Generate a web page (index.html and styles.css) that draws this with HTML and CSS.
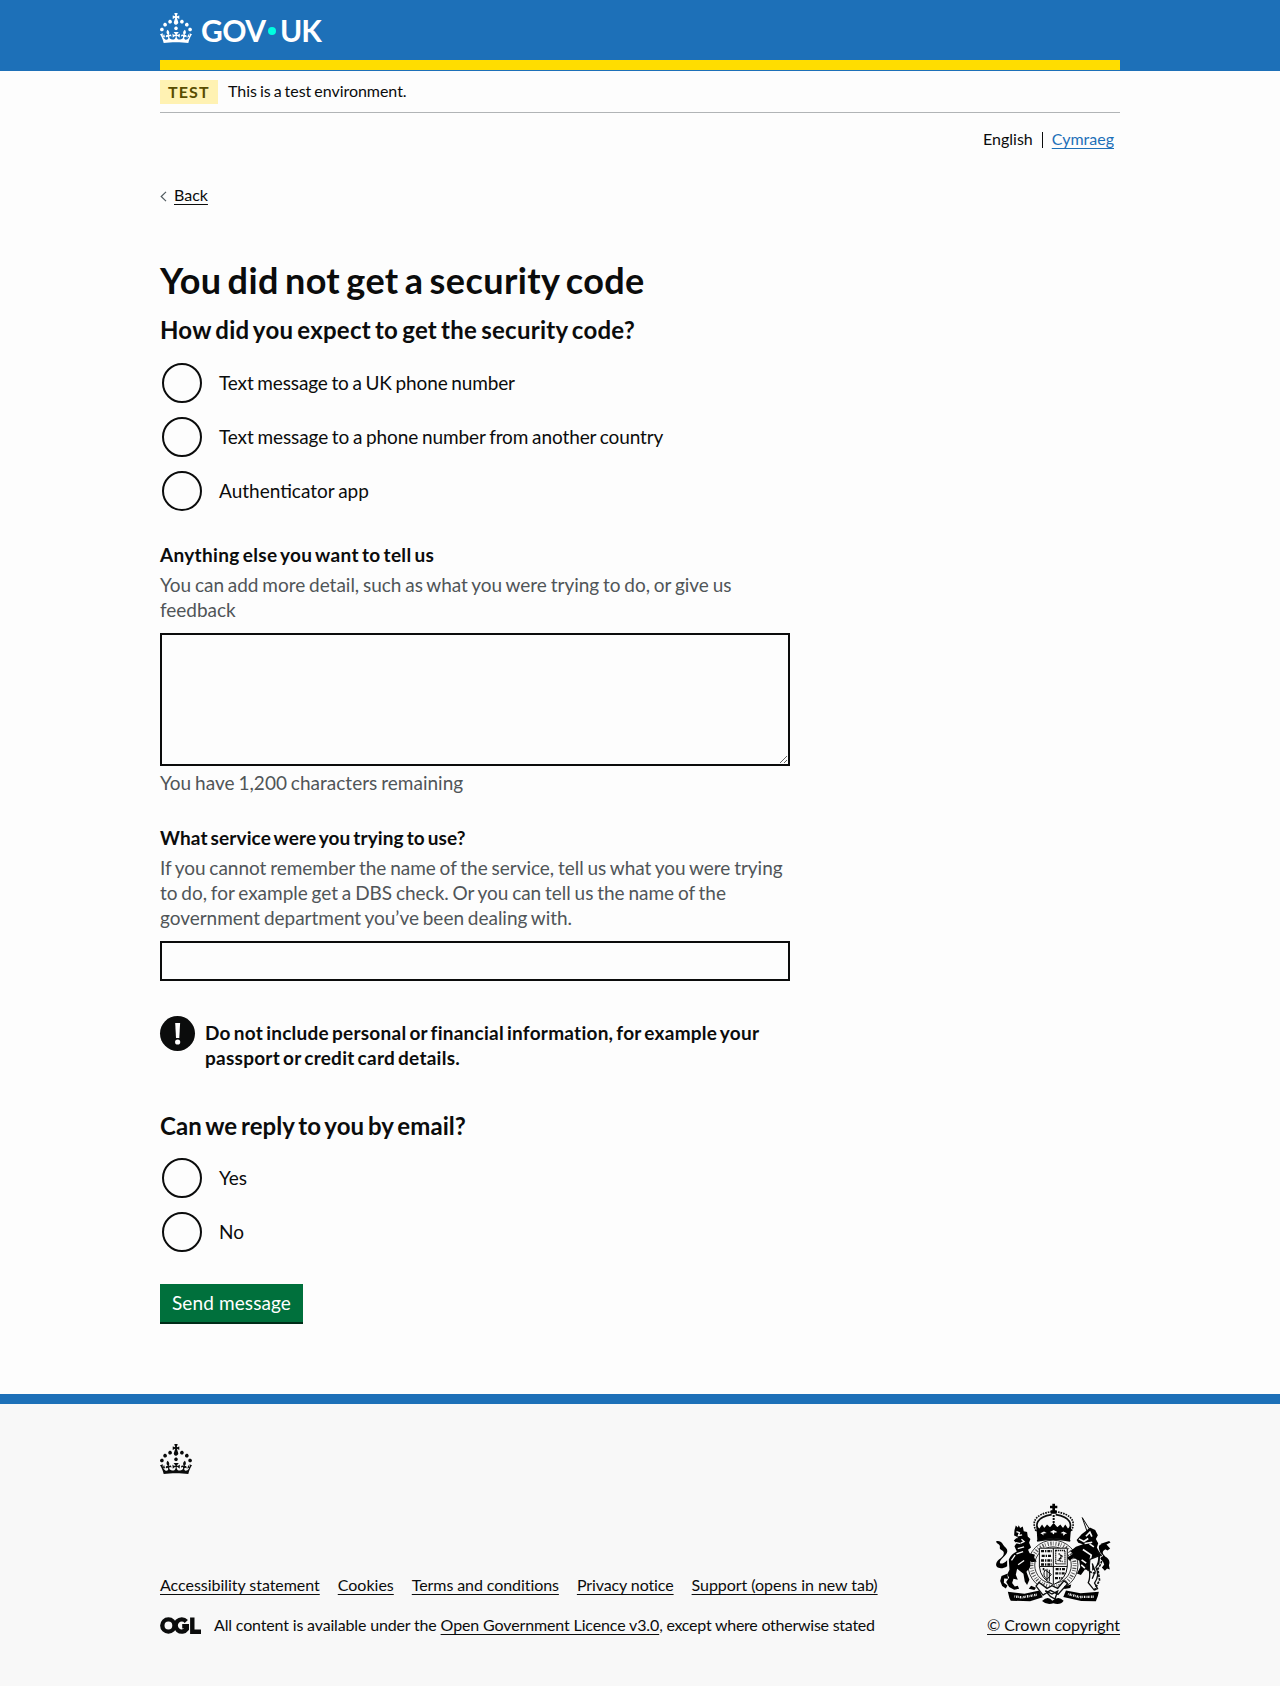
FILE: index.html
```html
<!DOCTYPE html>
<html lang="en">
<head>
<meta charset="utf-8">
<title>You did not get a security code - GOV.UK</title>
<link rel="stylesheet" href="styles.css">
</head>
<body>
<svg class="defs" width="0" height="0" aria-hidden="true">
  <symbol id="crown" viewBox="0 0 32 30"><path fill-rule="evenodd" d="M22.6 10.4c-1 .4-2-.1-2.4-1-.4-.9.1-2 1-2.4.9-.4 2 .1 2.4 1s-.1 2-1 2.4m-5.9 6.7c-.9.4-2-.1-2.4-1-.4-.9.1-2 1-2.4.9-.4 2 .1 2.4 1s-.1 2-1 2.4m10.8-3.7c-1 .4-2-.1-2.4-1-.4-.9.1-2 1-2.4.9-.4 2 .1 2.4 1s0 2-1 2.4m3.3 4.8c-1 .4-2-.1-2.4-1-.4-.9.1-2 1-2.4.9-.4 2 .1 2.4 1s-.1 2-1 2.4M17 4.7l2.3 1.2V2.5l-2.3.7-.2-.2.9-3h-3.4l.9 3-.2.2c-.1.1-2.3-.7-2.3-.7v3.4L15 4.7c.1.1.1.2.2.2l-1.3 4c-.1.2-.1.4-.1.6 0 1.1.8 2 1.9 2.2h.7c1-.2 1.9-1.1 1.9-2.1 0-.2 0-.4-.1-.6l-1.3-4c-.1-.2 0-.2.1-.3m-7.6 5.7c.9.4 2-.1 2.4-1 .4-.9-.1-2-1-2.4-.9-.4-2 .1-2.4 1s0 2 1 2.4m-5 3c.9.4 2-.1 2.4-1 .4-.9-.1-2-1-2.4-.9-.4-2 .1-2.4 1s.1 2 1 2.4m-3.2 4.8c.9.4 2-.1 2.4-1 .4-.9-.1-2-1-2.4-.9-.4-2 .1-2.4 1s0 2 1 2.4m14.8 11c4.4 0 8.6.3 12.3.8 1.1-4.5 2.4-7 3.7-8.8l-2.5-.9c.2 1.3.3 1.9 0 2.7-.4-.4-.8-1.1-1.1-2.3l-1.2 4c.7-.5 1.3-.8 2-.9-1.1 2.5-2.6 3.1-3.5 3-1.1-.2-1.7-1.2-1.5-2.1.3-1.2 1.5-1.5 2.1-.1 1.1-2.3-.8-3-2-2.3 1.9-1.9 2.1-3.5.6-5.6-2.1 1.6-2.1 3.2-1.2 5.5-1.2-1.4-3.2-.6-2.5 1.6.9-1.4 2.1-.5 1.9.8-.2 1.1-1.7 2.1-3.5 1.9-2.7-.2-2.9-2.1-2.9-3.6.7-.1 1.9.5 2.9 1.9l.4-4.3c-1.1 1.1-2.1 1.4-3.2 1.4.4-1.2 2.1-3 2.1-3h-5.4s1.7 1.9 2.1 3c-1.1 0-2.1-.2-3.2-1.4l.4 4.3c1-1.4 2.2-2 2.9-1.9-.1 1.5-.2 3.4-2.9 3.6-1.9.2-3.4-.8-3.5-1.9-.2-1.3 1-2.2 1.9-.8.7-2.3-1.2-3-2.5-1.6.9-2.2.9-3.9-1.2-5.5-1.5 2-1.3 3.7.6 5.6-1.2-.7-3.1 0-2 2.3.6-1.4 1.8-1.1 2.1.1.2.9-.3 1.9-1.5 2.1-.9.2-2.4-.5-3.5-3 .6 0 1.2.3 2 .9l-1.2-4c-.3 1.1-.7 1.9-1.1 2.3-.3-.8-.2-1.4 0-2.7l-2.9.9C1.3 23 2.6 25.5 3.7 30c3.7-.5 7.9-.8 12.3-.8"/></symbol>
</svg>

<header class="header">
  <div class="container header-inner">
    <a class="logo" href="#"><svg class="crown" aria-hidden="true"><use href="#crown"/></svg><span class="logo-gov">GOV</span><span class="logo-dot"></span><span class="logo-uk">UK</span></a>
  </div>
</header>

<div class="container">
  <div class="phase"><strong class="tag">TEST</strong><span class="phase-text">This is a test environment.</span></div>
  <nav class="languages"><span class="english">English</span><span class="divider"></span><a class="cymraeg" href="#">Cymraeg</a></nav>
  <a class="back" href="#"><svg class="chevron" viewBox="0 0 7 10" aria-hidden="true"><path d="M6 .4 1.2 5 6 9.6"/></svg><span>Back</span></a>

  <main class="main">
    <h1>You did not get a security code</h1>
    <h2 class="q1">How did you expect to get the security code?</h2>
    <div class="radios">
      <label class="radio"><input type="radio" name="method"><span class="uk-phone">Text message to a UK phone number</span></label>
      <label class="radio"><input type="radio" name="method"><span class="other-phone">Text message to a phone number from another country</span></label>
      <label class="radio"><input type="radio" name="method"><span class="app">Authenticator app</span></label>
    </div>

    <label class="label" for="more">Anything else you want to tell us</label>
    <p class="hint">You can add more detail, such as what you were trying to do, or give us<br>feedback</p>
    <textarea id="more" class="textarea"></textarea>
    <p class="count">You have 1,200 characters remaining</p>

    <label class="label" for="service">What service were you trying to use?</label>
    <p class="hint">If you cannot remember the name of the service, tell us what you were trying<br>to do, for example get a DBS check. Or you can tell us the name of the<br>government department you’ve been dealing with.</p>
    <input id="service" class="input" type="text">

    <div class="warning"><span class="warning-icon" aria-hidden="true"><svg viewBox="0 0 35 35"><path d="M15.2 7h4.9l-.8 15h-3.3z"/><circle cx="17.65" cy="26" r="2.6"/></svg></span><strong>Do not include personal or financial information, for example your<br>passport or credit card details.</strong></div>

    <h2 class="q2">Can we reply to you by email?</h2>
    <div class="radios">
      <label class="radio"><input type="radio" name="reply"><span>Yes</span></label>
      <label class="radio"><input type="radio" name="reply"><span>No</span></label>
    </div>
    <button class="button" type="button">Send message</button>
  </main>
</div>

<footer class="footer">
  <div class="container">
    <svg class="crown" aria-hidden="true"><use href="#crown"/></svg>
    <div class="meta">
      <div class="meta-main">
        <ul class="links">
          <li><a class="l1" href="#">Accessibility statement</a></li>
          <li><a class="l2" href="#">Cookies</a></li>
          <li><a class="l3" href="#">Terms and conditions</a></li>
          <li><a class="l4" href="#">Privacy notice</a></li>
          <li><a class="l5" href="#">Support (opens in new tab)</a></li>
        </ul>
        <div class="licence">
          <svg class="ogl" viewBox="0 0 41 17" aria-label="OGL"><g fill="none" stroke="#0b0c0c" stroke-width="4.4"><circle cx="8.4" cy="8.5" r="6.1"/><path d="M26.3 4.4A6.1 6.1 0 1 0 26.8 12V9.3h-4.6"/><path d="M32.3.5v14.2H41"/></g></svg>
          <span class="licence-text"><span class="t1">All content is available under the </span><a class="t2" href="#">Open Government Licence v3.0</a><span class="t3">, except where otherwise stated</span></span>
        </div>
      </div>
      <a class="copyright" href="#">
        <svg class="crest" viewBox="45 40 360 310" aria-hidden="true">
          <!-- royal crown -->
          <g fill="none" stroke="#0b0c0c">
            <path d="M180 126c-13-20-9-44 38-51M268 126c13-20 9-44-38-51" stroke-width="5"/>
            <path d="M171 124c-14-28-3-50 47-58M277 124c14-28 3-50-47-58" stroke-width="5" stroke-dasharray="5 3"/>
            <path d="M224 76v38" stroke-width="6" stroke-dasharray="6 3"/>
            <path d="M172 124q52-18 104 0M174 154q50-12 100 0" stroke-width="6"/>
            <path d="M178 141q46-13 92 0" stroke-width="11" stroke-dasharray="11 5"/>
          </g>
          <path fill-rule="evenodd" d="M220 42h8v6h7v8h-7v6h5v10h-18V62h5v-6h-7v-8h7zM172 108l9 9 8-12 7 10 8-10 9 8 11-13 11 13 9-8 8 10 7-10 8 12 10-9-4 46q-49-14-98 0zM184 131l11-5 9 5-9 7zM213 127l11-6 11 6-11 7zM244 131l9-5 11 5-11 7z"/>
          <!-- garter and shield -->
          <circle cx="222" cy="227" r="65" fill="none" stroke="#0b0c0c" stroke-width="12" stroke-dasharray="3 5 4 4 2 6" opacity=".7"/>
          <g fill="none" stroke="#0b0c0c" stroke-width="2.5"><circle cx="222" cy="227" r="75"/><circle cx="222" cy="227" r="55"/></g>
          <path d="M181 176h84v55q-2 38-42 55-39-17-42-55z" fill="#f8f8f8" stroke="#0b0c0c" stroke-width="3"/>
          <path d="M223 176v108M181 231h84" stroke="#0b0c0c" stroke-width="3"/>
          <g fill="none" stroke="#0b0c0c" stroke-width="7" stroke-dasharray="9 3 4 3">
            <path d="M186 185h33M188 199h31M186 213h33M186 225h33M230 239h31M229 252h31M228 266h23M191 239h5"/>
          </g>
          <path d="M230 183h28v40h-28zM239 192l10 9-8 13 10 2M236 214l14-16" fill="none" stroke="#0b0c0c" stroke-width="4" stroke-dasharray="4 2"/>
          <path d="M198 241q-9 18 6 29l13-15zM204 238v36M211 241v35" fill="none" stroke="#0b0c0c" stroke-width="3"/>
          <!-- lion -->
          <path d="M106 122l4-14 6 6 3-7 4 8 8-4 3 14 10 2 2 14 8 7-4 12 6 14-9 7 8 18-2 34-11 14 9 24-7 16-7-11-4-23-19-15-4 18 6 15-13-3-4 13 8 10 9-2 4 9-15 3-15-8-9-15 9-14-6-9 7-14-2-31q7-16 24-24l-7-16 6-9-8-8 8-8-7-8z"/>
          <path d="M84 230c-18 12-36 5-33-7 2-14 24-17 23-33-1-10-14-7-12-17 3-10-12-10-11-18 19-3 19 13 29 20 14 15-8 26-16 38-8 13 9 12 20-1z"/>
          <path d="M143 190l24 5-2 10 8 11-15 2-17-12zM67 260l17-7 3 15-12-1-1 13 11 8-5 9-11-7-6-15z"/>
          <path d="M112 126l9 3-3 9 11-2M127 149l8 7-10 5M110 159l14 3M116 177l19-5M106 140l9 5M132 186l-20 7M135 213l-18 13M97 213l11-16" fill="none" stroke="#f8f8f8" stroke-width="4"/>
          <!-- unicorn -->
          <path d="M310 84l22 35-8 5z" fill="#f8f8f8" stroke="#0b0c0c" stroke-width="3"/>
          <path d="M321 124l12-10 16 7 8 16-6 11 7 13-4 13 10 19-2 30-20 20-24-3-12 17-12-5 10-19-3-19-17-9-13 9-6-9 17-12-8-8 17-13 21-8-14-4-5-9 15-17z"/>
          <path d="M321 140l12-12 6 13M300 148l15 8 13-9M317 162l23-4M312 180l25 17-3 14M308 211l14 10M307 226l11 10M332 163l13 9" fill="none" stroke="#f8f8f8" stroke-width="5"/>
          <path d="M333 210c-6 33 6 48-5 70l18 22 10-4-9-17q17-24 4-47 10-14 9-35zM340 222l9 24-9 22" fill="#f8f8f8" stroke="#0b0c0c" stroke-width="4"/>
          <path d="M355 186c24 15 12 38 2 52l5 34-15 30M350 251q-28-2-27-25" fill="none" stroke="#0b0c0c" stroke-width="5" stroke-dasharray="8 3"/>
          <path d="M362 183c-10-30 24-16 18-4-15 7-7 18 4 25 14 11 8 27-6 40l-9-10 10-12-15-15 9-8-9-10z"/>
          <path d="M366 163l25-9 4 5-12 6 11 12-8 6-15-9zM369 207l18 5 6 28-13-4"/>
          <!-- compartment and motto -->
          <path d="M86 307l50 6 45-10 10 21-38 12-58-2-4-7zM261 303l44 9 55-5-3 13-6 16-44-1-54-12z"/>
          <path d="M106 321l23 3 45-8M267 314l34 9 44-1" fill="none" stroke="#f8f8f8" stroke-width="7" stroke-dasharray="2 3 4 2"/>
          <path d="M180 279l-9 11 21 27 22-14 23 12 29-32-11-9-19 23-17-8-15 8zM199 304l20 10 17-9-8 24-14-8z" fill="#f8f8f8" stroke="#0b0c0c" stroke-width="4"/>
          <path d="M189 335q18-17 31-1 18-16 34 0-9 14-31 8-19 7-34-7M156 289l15 6-5 7-17-4M255 291l22-6-3 11-18 3"/>
        </svg>
        <span>© Crown copyright</span>
      </a>
    </div>
  </div>
</footer>
</body>
</html>
```
FILE: styles.css
```css
* { box-sizing: border-box; }
body {
  margin: 0;
  background: #fdfdfd;
  color: #0b0c0c;
  font: 19px/25px Lato, "Open Sans", sans-serif;
  font-kerning: normal;
}
h1, h2, p, ul { margin: 0; padding: 0; }
a { color: inherit; }
.defs { display: block; }
.container { width: 960px; margin: 0 auto; }
.crown { display: block; width: 32px; height: 30px; fill: currentColor; }

.header { height: 71px; background: #1d70b8; color: #fff; }
.header-inner { height: 70px; border-bottom: 10px solid #ffdd00; }
.logo { display: flex; height: 60px; padding-top: 13px; text-decoration: none; font-size: 30px; line-height: 35px; font-weight: 700; }
.logo-gov { width: 65px; margin-left: 9px; letter-spacing: -.5px; }
.logo-dot { width: 8px; height: 8px; margin: 14px 4px 0 2px; border-radius: 50%; background: #00ffe0; }
.logo-uk { letter-spacing: -1px; }

.phase { display: flex; height: 42px; padding-top: 9px; border-bottom: 1px solid #b1b4b6; font-size: 16px; line-height: 20px; }
.tag { width: 58px; height: 24px; padding: 0 0 0 8px; background: #fff2b3; color: #594d00; line-height: 23px; letter-spacing: 1.1px; }
.phase-text { margin-left: 10px; padding-top: 1px; letter-spacing: -.04px; word-spacing: -1px; }
.languages { display: flex; justify-content: flex-end; padding: 16px 6px 0 0; font-size: 16px; line-height: 20px; }
.divider { width: 1px; height: 16px; margin: 3px 9px 0; background: #0b0c0c; }
.cymraeg { color: #1d70b8; text-decoration-thickness: 1px; text-underline-offset: 3px; }
.back { display: flex; width: max-content; margin-top: 36px; font-size: 16px; line-height: 20px; text-decoration: none; }
.back span { text-decoration: underline; text-decoration-thickness: 1px; text-underline-offset: 3px; }
.chevron { width: 7px; height: 11px; margin: 6px 7px 0 0; fill: none; stroke: #505a5f; stroke-width: 1.2; }

.main { padding-top: 55px; }
h1 { font-size: 36px; line-height: 40px; letter-spacing: .4px; word-spacing: -3px; }
h2 { font-size: 24px; line-height: 30px; word-spacing: -2px; }
.q1 { margin-top: 15px; letter-spacing: .25px; }
.q2 { margin-top: 41px; letter-spacing: .06px; }
.radios { display: grid; row-gap: 10px; margin-top: 16px; }
.q2 + .radios { margin-top: 15px; }
.radio { display: flex; align-items: center; height: 44px; word-spacing: -1px; }
.radio input { appearance: none; width: 40px; height: 40px; margin: 0 17px 0 2px; border: 2px solid #0b0c0c; border-radius: 50%; }
.radio span { margin-bottom: 1px; }
.uk-phone { letter-spacing: -.13px; }
.other-phone { letter-spacing: -.1px; }
.app { letter-spacing: 0; }

.label { display: block; margin-top: 29px; font-weight: 700; letter-spacing: .32px; word-spacing: -1.8px; }
.hint { margin-top: 5px; color: #505558; letter-spacing: -.02px; word-spacing: -1px; }
.count + .label { margin-top: 30px; letter-spacing: .12px; }
.textarea, .input { display: block; width: 630px; margin: 10px 0 0; border: 2px solid #0b0c0c; border-radius: 0; background: transparent; padding: 5px; font: inherit; }
.textarea { height: 133px; margin-top: 11px; resize: vertical; }
.input { height: 40px; margin-top: 11px; }
.count { margin-top: 4px; color: #505558; letter-spacing: .02px; word-spacing: -1px; }

.warning { display: flex; margin-top: 35px; }
.warning-icon { width: 35px; height: 35px; margin-right: 10px; border-radius: 50%; background: #0b0c0c; }
.warning-icon svg { display: block; width: 35px; height: 35px; fill: #fff; }
.warning strong { margin-top: 4px; letter-spacing: .25px; word-spacing: -1.8px; }

.button { display: block; width: 143px; height: 38px; margin: 30px 0 72px; border: 0; border-radius: 0; background: #00703c; color: #fff; box-shadow: 0 2px 0 #002d18; font: inherit; letter-spacing: .11px; padding: 0 0 1px; }

.footer { height: 292px; border-top: 10px solid #1d70b8; background: #f8f8f8; padding-top: 40px; font-size: 16px; line-height: 20px; }
.meta { display: flex; justify-content: space-between; align-items: flex-end; margin-top: 29px; }
.links { display: flex; column-gap: 18px; list-style: none; }
.footer a { text-decoration-thickness: 1px; text-underline-offset: 3px; }
.l1 { letter-spacing: -.04px; }
.l3 { letter-spacing: -.08px; }
.l4 { letter-spacing: -.1px; }
.l5 { letter-spacing: -.05px; }
.licence { display: flex; margin-top: 20px; }
.ogl { width: 41px; height: 17px; margin: 2px 13px 0 0; }
.licence-text { white-space: nowrap; }
.t1 { letter-spacing: -.16px; }
.t2 { letter-spacing: -.13px; }
.t3 { letter-spacing: -.25px; }
.copyright { display: block; width: 133px; letter-spacing: -.07px; white-space: nowrap; }
.crest { display: block; width: 120px; height: 103px; margin: 0 auto 9px 7px; }
```
